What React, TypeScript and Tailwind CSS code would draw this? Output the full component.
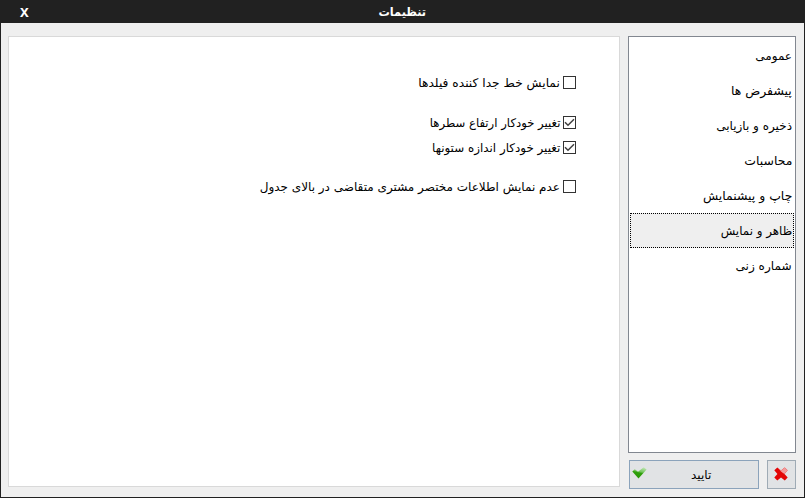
type Option = { label: string; checked: boolean; row: string; text: string };

const options: Option[] = [
  { label: "نمایش خط جدا کننده فیلدها", checked: false, row: "mt-[39px]", text: "scale-x-[1.02]" },
  { label: "تغییر خودکار ارتفاع سطرها", checked: true, row: "mt-[27px]", text: "scale-x-[0.972]" },
  { label: "تغییر خودکار اندازه ستونها", checked: true, row: "mt-3", text: "scale-x-[0.992]" },
  { label: "عدم نمایش اطلاعات مختصر مشتری متقاضی در بالای جدول", checked: false, row: "mt-[26px]", text: "" },
];

const sections = [
  { label: "عمومی", text: "" },
  { label: "پیشفرض ها", text: "scale-x-[1.034]" },
  { label: "ذخیره و بازیابی", text: "" },
  { label: "محاسبات", text: "scale-x-[1.035]" },
  { label: "چاپ و پیشنمایش", text: "scale-x-[1.035]" },
  { label: "ظاهر و نمایش", text: "scale-x-[0.99]" },
  { label: "شماره زنی", text: "scale-x-[1.01]" },
];

const selected = 5;

function CheckBox({ checked }: { checked: boolean }) {
  return (
    <span className="flex size-[13px] shrink-0 items-center justify-center border border-[#333333] bg-white">
      {checked && (
        <svg width="11" height="11" viewBox="0 0 11 11" fill="none" stroke="#404040" strokeWidth="1.5">
          <path d="M1 5.2 L4 8.2 L10 2.2" />
        </svg>
      )}
    </span>
  );
}

function Tick() {
  return (
    <svg className="mb-[3px]" width="15" height="12" viewBox="0 0 15 12">
      <defs>
        <linearGradient id="tick" x1="0.8" y1="0" x2="0.5" y2="1">
          <stop offset="0" stopColor="#c4e8b8" />
          <stop offset="0.42" stopColor="#72c45c" />
          <stop offset="0.55" stopColor="#2fa00b" />
          <stop offset="1" stopColor="#2a9608" />
        </linearGradient>
      </defs>
      <path d="M0.3 4.5 L2.8 2.2 L6 4.8 L11.7 0.3 L14.6 2.4 L6.5 11.5 Z" fill="url(#tick)" />
    </svg>
  );
}

function Cross() {
  return (
    <svg width="14" height="14" viewBox="0 0 14 14">
      <path d="M3.3 0.4 L7 3.4 L10.7 0.4 L13.6 3.3 L10.5 6.9 L13.7 10.5 L10.8 13.5 L7 10.4 L3.3 13.5 L0.3 10.5 L3.4 6.9 L0.3 3.3 Z" fill="#e30505" />
      <path d="M4.2 1.1 L7 3.4 L10.7 0.4 L13.6 3.3 L10.5 6.9 Q8.5 6 7 4.6 Z" fill="#f39b9b" />
    </svg>
  );
}

export default function App() {
  return (
    <div className="flex h-[498px] w-[805px] flex-col overflow-hidden border border-t-0 border-[#212121] bg-[#efefef] font-['DejaVu_Sans',sans-serif] text-[12px] leading-4 text-black">
      <header className="flex h-[23px] shrink-0 items-center bg-[#212121] pl-[19px] text-white">
        <button className="w-3 text-left font-['Noto_Sans',sans-serif] text-[13px] font-bold">X</button>
        <h1 dir="rtl" className="flex w-[741px] justify-center text-[12px] font-bold">
          <span className="scale-x-[0.94] whitespace-nowrap">تنظیمات</span>
        </h1>
      </header>
      <div className="flex pt-[13px] pl-[7px]">
        <main dir="rtl" className="flex h-[451px] w-[612px] flex-col border border-[#d9d9d9] bg-white pr-[43px]">
          {options.map((o) => (
            <label key={o.label} className={`flex h-[13px] items-center gap-[3px] ${o.row}`}>
              <CheckBox checked={o.checked} />
              <span className={`origin-right whitespace-nowrap ${o.text}`}>{o.label}</span>
            </label>
          ))}
        </main>
        <aside className="ml-2 flex w-[168px] flex-col">
          <ul dir="rtl" className="h-[417px] border border-[#828790] bg-white p-px">
            {sections.map((s, i) => (
              <li
                key={s.label}
                className={`flex h-[35px] items-center border border-dotted pr-px ${i === selected ? "border-black bg-[#efefef]" : "border-transparent"}`}
              >
                <span className={`origin-right whitespace-nowrap ${s.text}`}>{s.label}</span>
              </li>
            ))}
          </ul>
          <div className="mt-[7px] ml-px flex gap-2">
            <button className="flex h-[29px] w-[130px] items-center border border-[#8ba3bb] bg-[#e1e3e5] pl-0.5">
              <Tick />
              <span dir="rtl" className="ml-[44px] whitespace-nowrap">تایید</span>
            </button>
            <button className="flex size-[29px] items-center border border-[#9fabb5] bg-[#e1e3e5] pb-px pl-1.5">
              <Cross />
            </button>
          </div>
        </aside>
      </div>
    </div>
  );
}
